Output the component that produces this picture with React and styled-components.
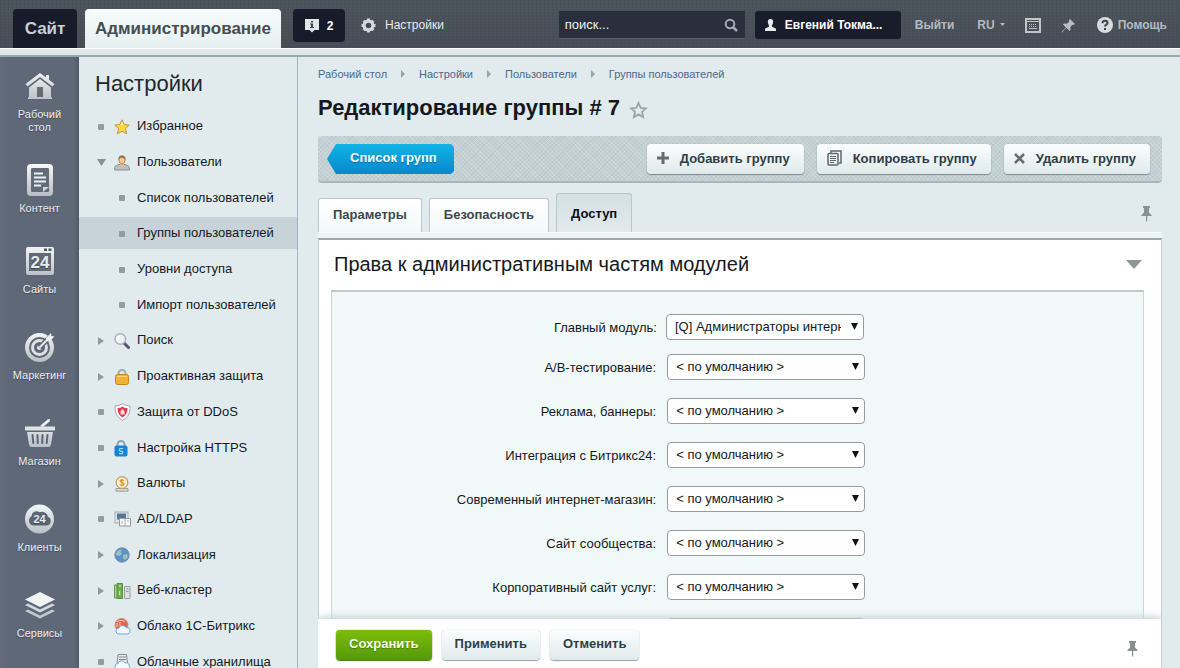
import { useState } from 'react'
import styled, { createGlobalStyle } from 'styled-components'

const GlobalStyle = createGlobalStyle`
    * {
        box-sizing: border-box;
    }
    body {
        margin: 0;
        background: #e1eaec;
        color: #14191c;
        font-family: "Liberation Sans", Arial, sans-serif;
        font-size: 13px;
    }
    button, input, select {
        font-family: inherit;
        margin: 0;
    }
    a {
        color: inherit;
        text-decoration: none;
    }
    svg {
        display: block;
        flex: none;
    }
`

const Page = styled.div`
    display: flex;
    flex-direction: column;
    height: 100vh;
    overflow: hidden;
`

/* top bar */

const TopBar = styled.header`
    display: flex;
    align-items: flex-start;
    flex: none;
    height: 48px;
    padding: 9px 13px 0;
    background:
        repeating-linear-gradient(0deg, rgba(255, 255, 255, 0.02) 0 1px, transparent 1px 3px),
        repeating-linear-gradient(90deg, rgba(0, 0, 0, 0.03) 0 1px, transparent 1px 4px),
        linear-gradient(#4b535b, #464d56);
`

const Strip = styled.div`
    flex: none;
    height: 9px;
    background: #dee8ea;
    border-top: 1px solid #fff;
    border-bottom: 2px solid #9ca6ab;
`

const SiteTab = styled.a`
    height: 39px;
    line-height: 40px;
    width: 64px;
    margin-right: 8px;
    text-align: center;
    font-size: 17px;
    font-weight: bold;
    color: #c9ced8;
    background: #181b29;
    border-radius: 4px 4px 0 0;
`

const AdminTab = styled(SiteTab)`
    width: 196px;
    margin-right: 12px;
    color: #474d51;
    background: linear-gradient(#f7fcfb, #e6eff1);
`

const Notice = styled.button`
    display: flex;
    align-items: center;
    justify-content: center;
    gap: 8px;
    width: 52px;
    height: 33px;
    padding: 0;
    border: 0;
    border-radius: 4px;
    background: #181b29;
    color: #fff;
    font-size: 12px;
    font-weight: bold;
`

const TopLink = styled.a`
    display: flex;
    align-items: center;
    gap: ${p => p.$gap || 5}px;
    height: 32px;
    margin-left: ${p => p.$space || 0}px;
    color: ${p => p.$bright ? '#e6eaee' : '#b4bac1'};
    font-size: 12px;
    font-weight: ${p => p.$bright ? 'normal' : 'bold'};
`

const IconButton = styled.button`
    display: flex;
    align-items: center;
    justify-content: center;
    padding: 0;
    border: 0;
    background: none;
    height: 32px;
    margin-left: ${p => p.$space || 0}px;
`

const Search = styled.form`
    display: flex;
    align-items: center;
    width: 186px;
    height: 28px;
    margin: 2px 10px 0 auto;
    padding: 0 7px 0 6px;
    background: #2b2e3d;
    border-bottom: 1px solid #5b636c;
`

const SearchInput = styled.input`
    flex: 1;
    min-width: 0;
    padding: 0;
    border: 0;
    outline: 0;
    background: none;
    color: #fff;
    font-size: 13px;
    &::placeholder {
        color: #f0f2f5;
        opacity: 1;
    }
`

const User = styled.button`
    display: flex;
    align-items: center;
    gap: 9px;
    width: 146px;
    height: 28px;
    margin: 2px 14px 0 0;
    padding: 0 10px;
    border: 0;
    border-radius: 3px;
    background: #181c2b;
    color: #fff;
    font-size: 12px;
    font-weight: bold;
    white-space: nowrap;
`

/* left part */

const Body = styled.div`
    display: flex;
    flex: 1;
    min-height: 0;
`

const Rail = styled.nav`
    display: flex;
    flex-direction: column;
    gap: 35px;
    flex: none;
    width: 79px;
    padding-top: 13px;
    background: linear-gradient(90deg, #666c78 0, #5f6877 8px, #5f6877 74px, #515a6a 100%);
`

const RailGroup = styled.div`
    display: flex;
    flex-direction: column;
    gap: ${p => p.$gap}px;
`

const RailItem = styled.a`
    display: flex;
    flex-direction: column;
    align-items: center;
    gap: 6px;
    color: #e8edf1;
    font-size: 11px;
    line-height: 13px;
    text-align: center;
    text-shadow: 0 1px 1px #3f4856;
`

const RailLabel = styled.span`
    width: 60px;
    display: flex;
    justify-content: center;
`

const Menu = styled.nav`
    display: flex;
    flex-direction: column;
    flex: none;
    width: 219px;
    overflow: hidden;
    background: #e1ebed;
    border-right: 1px solid #9db5c6;
`

const MenuTitle = styled.h2`
    margin: 0;
    padding: 14px 16px 13px;
    font-size: 22px;
    line-height: 26px;
    font-weight: normal;
    color: #20272a;
`

const MenuList = styled.ul`
    display: grid;
    flex: 1;
    grid-auto-rows: minmax(30px, 1fr);
    gap: 4px;
    margin: 0 0 -9px;
    padding: 0;
    list-style: none;
`

const MenuLink = styled.a`
    display: flex;
    align-items: center;
    height: 100%;
    padding-left: ${p => p.$sub ? 38 : 17}px;
    background: ${p => p.$active ? '#c7d3d8' : 'none'};
    font-size: 13px;
    white-space: nowrap;
`

const Marker = styled.span`
    display: flex;
    justify-content: center;
    width: 10px;
    margin: 2px ${p => p.$sub ? 10 : 8}px 0 0;
`

const MenuIcon = styled.span`
    display: flex;
    width: 23px;
    margin-top: 2px;
`

/* content */

const Main = styled.main`
    display: flex;
    flex-direction: column;
    flex: 1;
    min-width: 0;
    padding: 0 18px 0 20px;
    background: #e1eaed;
`

const Crumbs = styled.nav`
    display: flex;
    align-items: center;
    padding-top: 9px;
    line-height: 16px;
    font-size: 11px;
    color: #4b6889;
`

const CrumbArrow = styled.svg`
    margin: 0 13px 0 14px;
`

const TitleRow = styled.div`
    display: flex;
    align-items: center;
    gap: 9px;
    padding: 12px 0 14px;
`

const Title = styled.h1`
    margin: 0;
    font-size: 22px;
    line-height: 28px;
    color: #14191c;
`

const Toolbar = styled.div`
    display: flex;
    align-items: flex-start;
    gap: 13px;
    height: 47px;
    flex: none;
    padding: 8px 12px 0 9px;
    border-radius: 4px;
    border-bottom: 2px solid #a9b7ba;
    background:
        repeating-linear-gradient(45deg, rgba(255, 255, 255, 0.16) 0 1px, transparent 1px 3px),
        repeating-linear-gradient(-45deg, rgba(90, 110, 120, 0.08) 0 1px, transparent 1px 3px),
        #c3d0d4;
`

const BackButton = styled.a`
    width: 127px;
    height: 30px;
    margin-right: auto;
    padding-left: 23px;
    line-height: 28px;
    color: #fff;
    font-size: 13px;
    font-weight: bold;
    background: linear-gradient(#10b3e4, #0788cf);
    clip-path: polygon(9px 0, 124px 0, 127px 3px, 127px 27px, 124px 30px, 9px 30px, 0 15px);
    text-shadow: 0 1px 1px #0871a9;
`

const Button = styled.button`
    display: flex;
    align-items: center;
    justify-content: center;
    height: 30px;
    padding: 0 13px 3px;
    border: 0;
    border-radius: 4px;
    font-size: 13px;
    font-weight: bold;
    color: #303e45;
    background: linear-gradient(#fbfefe, #dfe9ec);
    box-shadow: 0 1px 1px #98a5aa, 0 0 1px #98a5aa;
`

const ToolButton = styled(Button)`
    gap: 11px;
    padding: 0 14px 2px 10px;
    box-shadow: 0 1px 1px #7d898e, 0 0 1px #98a5aa;
`

const SaveButton = styled(Button)`
    color: #f6fbe9;
    background: linear-gradient(#7dbd0d, #54990a);
    box-shadow: 0 1px 1px #47720e, 0 0 1px #47720e;
    text-shadow: 0 1px 1px #447b06;
`

const Tabs = styled.div`
    display: flex;
    align-items: flex-end;
    gap: 7px;
    flex: none;
    height: 49px;
`

const Tab = styled.button`
    height: ${p => p.$active ? 39 : 34}px;
    padding: 0 14px ${p => p.$active ? 0 : 2}px;
    border: 1px solid #b9c6cb;
    border-bottom: 0;
    border-radius: 3px 3px 0 0;
    background: ${p => p.$active ? 'linear-gradient(#d5e0e3, #e1eaed)' : 'linear-gradient(#fff, #f3f9fa)'};
    color: ${p => p.$active ? '#0b0f11' : '#3b484f'};
    font-size: 13px;
    font-weight: bold;
`

const TabsPin = styled.div`
    display: flex;
    align-self: center;
    margin: 12px 10px 0 auto;
`

const TabsLine = styled.div`
    flex: none;
    height: 6px;
    background: #edf3f5;
    border-top: 1px solid #f8fbfb;
`

const Panel = styled.section`
    flex: 1;
    min-height: 0;
    overflow: hidden;
    padding: 0 17px 0 12px;
    background: #fff;
    border: 1px solid #c4ced2;
    border-top: 2px solid #9faaae;
    border-bottom: 0;
`

const PanelHead = styled.div`
    display: flex;
    align-items: center;
    justify-content: space-between;
    height: 50px;
    padding: 0 1px 2px 3px;
`

const PanelTitle = styled.h2`
    margin: 0;
    font-size: 20px;
    font-weight: normal;
    color: #14191c;
`

const Form = styled.form`
    display: flex;
    flex-direction: column;
    gap: 18px;
    padding: 22px 0 22px 7px;
    background: #f1f8f8;
    border: 1px solid #ccd6d9;
    border-top: 2px solid #c0cacd;
`

const Field = styled.div`
    display: grid;
    grid-template-columns: 2fr 3fr;
    align-items: center;
    column-gap: ${p => p.$main ? 9 : 11}px;
    margin-bottom: ${p => p.$main ? -4 : 0}px;
`

const Label = styled.label`
    text-align: right;
    font-size: 13px;
`

const SelectBox = styled.div`
    grid-column: 2;
    position: relative;
    width: 198px;
`

const Select = styled.select`
    display: block;
    appearance: none;
    width: 100%;
    height: 26px;
    padding: 0 22px 1px 8px;
    border: 1px solid #979c9e;
    border-radius: 4px;
    background: #fff;
    color: #14191c;
    font-size: 13px;
    outline: 0;
`

const SelectArrow = styled.svg`
    position: absolute;
    right: 6px;
    top: 9px;
    pointer-events: none;
`

const Footer = styled.footer`
    display: flex;
    align-items: flex-start;
    gap: 10px;
    flex: none;
    height: 49px;
    padding: 11px 23px 0 18px;
    background: #fff;
    border-right: 1px solid #c4ced2;
    box-shadow: 0 -2px 8px #c3d1d4;
    clip-path: inset(-10px 0 0 0);
`

const FooterPin = styled.div`
    margin: 10px 0 0 auto;
`

/* icons */

const RailSvg = ({ children }) => <svg width="32" height="32" viewBox="0 0 32 32">
    <defs>
        <linearGradient id="metal" x1="0" y1="0" x2="0" y2="32" gradientUnits="userSpaceOnUse">
            <stop offset="0" stopColor="#f6f8f9" />
            <stop offset="1" stopColor="#b5bdc4" />
        </linearGradient>
    </defs>
    {children}
</svg>

const HomeIcon = () => <RailSvg>
    <path d="M16 3 1.500 14l2 2.500L16 7l12.500 9.500 2-2.500-5.500-4.200V5h-3v2.500z" fill="url(#metal)" />
    <path d="M5 17.500 16 9l11 8.500V27h1v2H4v-2h1z" fill="url(#metal)" />
    <path d="M13 17h6v10h-6z" fill="#656d72" />
</RailSvg>

const ContentIcon = () => <RailSvg>
    <rect x="3" y="0" width="26" height="32" rx="4" fill="url(#metal)" />
    <rect x="7" y="4" width="18" height="24" rx="1" fill="#626c78" />
    <path d="M10 9.500h9M10 13.500h12M10 17.500h12M10 21.500h7" stroke="#eef1f3" strokeWidth="2" />
    <path d="M19 28v-5h6z" fill="#d0d6da" />
</RailSvg>

const SitesIcon = () => <RailSvg>
    <path d="M4 2h24a2 2 0 0 1 2 2v24a2 2 0 0 1-2 2H4a2 2 0 0 1-2-2V4a2 2 0 0 1 2-2z" fill="url(#metal)" />
    <rect x="5" y="8" width="22" height="18" fill="#616a75" />
    <path d="M20 3.500h3v2.500h-3zM24.500 3.500h3v2.500h-3z" fill="#4e5763" />
    <text x="16" y="23" textAnchor="middle" fontSize="17" fontWeight="bold" fill="#e8ecef">24</text>
</RailSvg>

const TargetIcon = () => <RailSvg>
    <circle cx="15.500" cy="16.500" r="12.500" fill="none" stroke="url(#metal)" strokeWidth="4" />
    <circle cx="15.500" cy="16.500" r="7" fill="none" stroke="#dde2e5" strokeWidth="3" />
    <circle cx="15.500" cy="16.500" r="2.500" fill="#dde2e5" />
    <path d="M15.500 16.500 29 3" stroke="#5f6877" strokeWidth="5" />
    <path d="M15.500 16.500 25 7" stroke="#e6eaed" strokeWidth="2" />
    <path d="m22 7 5-5 .5 3 3 .5-5 5-3-.5z" fill="#eef1f3" />
</RailSvg>

const BasketIcon = () => <RailSvg>
    <path d="M16 9 23.500 2.500 26 2l-.5 2.500L19 10z" fill="#eef1f3" />
    <path d="M1 9.500h30v4H1z" fill="url(#metal)" />
    <path d="M3 15h26l-2 12.500a3 3 0 0 1-3 2.500H8a3 3 0 0 1-3-2.500z" fill="url(#metal)" />
    <path d="m8.500 18 .8 8M13.500 18l.3 8M18.500 18l-.3 8M23.500 18l-.8 8" stroke="#5c6573" strokeWidth="2" strokeLinecap="round" />
</RailSvg>

const ClientsIcon = () => <RailSvg>
    <circle cx="15.500" cy="16" r="14.500" fill="url(#metal)" />
    <path d="M9 22.500a5 5 0 0 1-1.500-9.200 5 5 0 0 1 8-4 6 6 0 0 1 8.500 4.500 4.600 4.600 0 0 1-1 8.700z" fill="#5c6571" />
    <text x="15.500" y="20" textAnchor="middle" fontSize="11" fontWeight="bold" fill="#e8ecef">24</text>
</RailSvg>

const ServicesIcon = () => <RailSvg>
    <path d="M16 3 31 10.500 16 18 1 10.500z" fill="#f0f3f4" />
    <path d="m1 16 3-1.500 12 6 12-6 3 1.500-15 7.500z" fill="#d5dade" />
    <path d="m1 22 3-1.500 12 6 12-6 3 1.500-15 7.500z" fill="#c2c9ce" />
</RailSvg>

const Small = ({ children }) => <svg width="16" height="16" viewBox="0 0 16 16">{children}</svg>

const menuIcons = {
    star: <Small><path d="m8 .8 2.200 4.700 5 .6-3.700 3.500 1 5.200L8 12.200l-4.500 2.600 1-5.200L.8 6.100l5-.6z" fill="#fbd640" stroke="#c39443" strokeWidth="1" strokeLinejoin="round" /><path d="m8 2.500 1.500 3.500H6.500z" fill="#fff3ae" /></Small>,
    user: <Small>
        <path d="M.7 15v-2.500C.7 10.500 4 10 5 9.500h6c1 .5 4.300 1 4.300 3V15z" fill="#bcc1c6" stroke="#858b92" />
        <path d="M6 8h4v2l-2 2.500L6 10z" fill="#eebd87" />
        <ellipse cx="8" cy="5" rx="3" ry="4" fill="#f4c995" stroke="#b08a5c" />
        <path d="M4.500 5C4 1.500 6 .5 8 .5s4 1 3.500 4.500C10.500 3 7.500 2.500 6 3z" fill="#93714a" />
    </Small>,
    search: <Small>
        <path d="m10 10 4.500 4.500" stroke="#5a5178" strokeWidth="3" strokeLinecap="round" />
        <circle cx="6.300" cy="6" r="5.300" fill="#edf3f7" stroke="#a7b1b8" strokeWidth="1.400" />
        <path d="M3 6c0-2 1.500-3 3-3" stroke="#fff" strokeWidth="1.500" fill="none" />
    </Small>,
    lock: <Small>
        <path d="M4.500 7V4.500a3.500 3.500 0 0 1 7 0V7" fill="none" stroke="#a5a9aa" strokeWidth="2" />
        <rect x="1.500" y="5.500" width="13" height="10" rx="2" fill="#efb331" stroke="#bf8722" />
        <path d="M3 7.500h10" stroke="#ffd66d" />
    </Small>,
    shield: <svg width="17" height="18" viewBox="0 0 17 18">
        <path d="M8.500.7C11 2.200 13 2.500 16 3c.3 7-2 11.500-7.500 14.300C3 14.500.7 10 1 3c3-.5 5-.8 7.500-2.300z" fill="#fff" stroke="#a5a5a9" />
        <path d="M8.500 3.500C10 4.500 11.500 5 13.500 5c0 4.500-1.500 7.500-5 9.500-3.500-2-5-5-5-9.500 2 0 3.500-.5 5-1.500z" fill="#e33d50" />
        <path d="M6.500 8h4v3.500h-4zM7.300 8V6.500h2.400V8" fill="#fff" opacity=".8" />
    </svg>,
    https: <svg width="14" height="17" viewBox="0 0 14 17">
        <path d="M3.500 7V4.500a3.500 3.500 0 0 1 7 0V7" fill="none" stroke="#8aa4b5" strokeWidth="2" />
        <rect x=".5" y="5.500" width="13" height="11" rx="2" fill="#1683d4" />
        <path d="M9 8.500H6.500a1.300 1.300 0 0 0 0 2.600h1a1.300 1.300 0 0 1 0 2.600H5" fill="none" stroke="#a4d9fb" strokeWidth="1.200" />
    </svg>,
    money: <Small>
        <path d="M2 12.500h12v2.700H2z" fill="#d5d8d8" stroke="#9c9c99" />
        <circle cx="8" cy="6.500" r="5.800" fill="#fbf2d8" stroke="#c7a05d" strokeWidth="1.200" />
        <path d="M10 4.500C9 3.500 6 3.500 6 5s4 1.200 4 3-3 1.800-4 .6M8 2.800v7.500" fill="none" stroke="#d99526" strokeWidth="1.200" />
    </Small>,
    ldap: <svg width="17" height="16" viewBox="0 0 17 16">
        <rect x="1" y="1" width="13" height="11" fill="#dfe6eb" stroke="#a2adb6" />
        <path d="M3 2.500h9v6H3z" fill="#577492" />
        <path d="M5.500 7.500h11v7.500h-11z" fill="#f7f8f9" stroke="#8f999f" />
        <path d="M8 10v3M11 7.500V15M13 10h2" stroke="#a2acb2" />
    </svg>,
    globe: <Small>
        <circle cx="8" cy="8" r="7.200" fill="#5c92cc" stroke="#718da9" />
        <path d="M3 4.500c2-2 4-2 5-1.500L6.500 5 8 7l-3 2-3-1zM9 8l4-1 1 3-3 3-2-2z" fill="#9cc4b4" />
    </Small>,
    cluster: <svg width="17" height="16" viewBox="0 0 17 16">
        <path d="M.5 2h3v13h-3z" fill="#acd58e" stroke="#67974f" />
        <path d="M3 .5h5.500v15H3z" fill="#6cb14b" stroke="#588b44" />
        <path d="M5 3h2M5.700 8v4" stroke="#ddf2d2" />
        <path d="M10.500 3.500h5.500v12h-5.500z" fill="#dce0e2" stroke="#969ea3" />
        <path d="M12 6h2.500M12 8.500h2.500" stroke="#92999d" />
    </svg>,
    cloud: <svg width="17" height="17" viewBox="0 0 17 17">
        <circle cx="7.500" cy="7" r="6.500" fill="#df654b" stroke="#c68d80" />
        <path d="M3 4c2-2 6-2 8 0M3 9V5M6 9V4" stroke="#f9cec2" fill="none" />
        <path d="M5 16a3 3 0 0 1 0-6 3.800 3.800 0 0 1 7-.5A3.300 3.300 0 0 1 13.500 16z" fill="#f2faff" stroke="#6da9d8" />
    </svg>,
    storage: <svg width="17" height="16" viewBox="0 0 17 16">
        <path d="M4 .5h8.500l1 9H3z" fill="#e6eaec" stroke="#858e94" />
        <path d="M5 3h7M5 5.500h7" stroke="#7f8a91" />
        <path d="M4 15.500a3 3 0 0 1 0-6 3.800 3.800 0 0 1 7-.5 3.300 3.300 0 0 1 2 6.500z" fill="#f2faff" stroke="#6da9d8" />
    </svg>,
}

const Dot = () => <svg width="6" height="6" viewBox="0 0 6 6"><rect width="6" height="6" rx="1" fill="#939d9f" /></svg>

const Right = () => <svg width="8" height="10" viewBox="0 0 8 10"><path d="M1 1v8l6-4z" fill="#919b9e" /></svg>

const Down = () => <svg width="9" height="8" viewBox="0 0 9 8"><path d="M0 0h9L4.500 7z" fill="#879194" /></svg>

const PinIcon = () => <svg width="11" height="17" viewBox="0 0 11 17">
    <path d="M2 1h7v1.500L8 3.500v4L10.500 10v1h-10v-1L3 7.500v-4l-1-1zM5 11h1.200v5.500H5z" fill="#87918f" />
</svg>

const GearIcon = () => <svg width="15" height="15" viewBox="0 0 15 15">
    <g stroke="#d4d8dc" strokeWidth="3">
        <path d="M7.500 .5v14M.5 7.500h14M2.700 2.700l9.600 9.600M12.300 2.700 2.700 12.300" />
    </g>
    <circle cx="7.500" cy="7.500" r="6" fill="#d4d8dc" />
    <circle cx="7.500" cy="7.500" r="2.700" fill="#414851" />
</svg>

const railTop = [
    { label: 'Рабочий стол', Icon: HomeIcon },
    { label: 'Контент', Icon: ContentIcon },
    { label: 'Сайты', Icon: SitesIcon },
]

const railBottom = [
    { label: 'Маркетинг', Icon: TargetIcon },
    { label: 'Магазин', Icon: BasketIcon },
    { label: 'Клиенты', Icon: ClientsIcon },
    { label: 'Сервисы', Icon: ServicesIcon },
]

const menu = [
    { label: 'Избранное', icon: 'star', mark: 'dot' },
    { label: 'Пользователи', icon: 'user', mark: 'down' },
    { label: 'Список пользователей', sub: true },
    { label: 'Группы пользователей', sub: true },
    { label: 'Уровни доступа', sub: true },
    { label: 'Импорт пользователей', sub: true },
    { label: 'Поиск', icon: 'search', mark: 'right' },
    { label: 'Проактивная защита', icon: 'lock', mark: 'right' },
    { label: 'Защита от DDoS', icon: 'shield', mark: 'dot' },
    { label: 'Настройка HTTPS', icon: 'https', mark: 'dot' },
    { label: 'Валюты', icon: 'money', mark: 'right' },
    { label: 'AD/LDAP', icon: 'ldap', mark: 'dot' },
    { label: 'Локализация', icon: 'globe', mark: 'right' },
    { label: 'Веб-кластер', icon: 'cluster', mark: 'right' },
    { label: 'Облако 1С-Битрикс', icon: 'cloud', mark: 'right' },
    { label: 'Облачные хранилища', icon: 'storage', mark: 'dot' },
]

const crumbs = ['Рабочий стол', 'Настройки', 'Пользователи', 'Группы пользователей']

const tabs = ['Параметры', 'Безопасность', 'Доступ']

const fields = [
    { label: 'Главный модуль:', value: '[Q] Администраторы интернет-магазина', main: true },
    { label: 'А/В-тестирование:' },
    { label: 'Реклама, баннеры:' },
    { label: 'Интеграция с Битрикс24:' },
    { label: 'Современный интернет-магазин:' },
    { label: 'Сайт сообщества:' },
    { label: 'Корпоративный сайт услуг:' },
]

const marks = { dot: <Dot />, right: <Right />, down: <Down /> }

const Header = () => <TopBar>
    <SiteTab href="#">Сайт</SiteTab>
    <AdminTab href="#">Администрирование</AdminTab>
    <Notice aria-label="Уведомления">
        <svg width="14" height="15" viewBox="0 0 14 15">
            <path d="M0 1h14v11H9.500L7 14.500 4.500 12H0z" fill="#e1e5e9" />
            <path d="M6 3h2v1.500H6zM5 5.500h3V9h1v1H5V9h1V6.500H5z" fill="#3a4350" />
        </svg>
        2
    </Notice>
    <TopLink href="#" $bright $space={16} $gap={9}><GearIcon />Настройки</TopLink>
    <Search onSubmit={e => e.preventDefault()}>
        <SearchInput type="text" placeholder="поиск..." aria-label="Поиск" />
        <IconButton type="submit" aria-label="Найти">
            <svg width="14" height="14" viewBox="0 0 14 14" fill="none" stroke="#a3a8b1" strokeWidth="2">
                <circle cx="6" cy="6" r="4.300" />
                <path d="m9 9 4 4" strokeWidth="2.500" />
            </svg>
        </IconButton>
    </Search>
    <User>
        <svg width="11" height="12" viewBox="0 0 11 12">
            <path d="M5.500 0C8 0 8.500 2 8 4 7.700 5.500 7 6 7 7.500c0 1 4 1 4 3V12H0v-1.500c0-2 4-2 4-3C4 6 3.300 5.500 3 4c-.5-2 0-4 2.500-4z" fill="#e7eaed" />
        </svg>
        Евгений Токма...
    </User>
    <TopLink href="#">Выйти</TopLink>
    <TopLink href="#" $space={23}>RU<svg width="5" height="4" viewBox="0 0 5 4"><path d="M0 0h5L2.500 3z" fill="#b4bac1" /></svg></TopLink>
    <IconButton $space={20} aria-label="Клавиатура">
        <svg width="16" height="15" viewBox="0 0 16 15" fill="none" stroke="#c0c5ca">
            <path d="M1 1h14v13H1z" strokeWidth="2" />
            <path d="M1 3.500h14" />
            <path d="M4 6.500h8M4 8.500h8" strokeDasharray="1 1" />
            <path d="M4 10.500h8" />
        </svg>
    </IconButton>
    <IconButton $space={20} aria-label="Закрепить">
        <svg width="15" height="15" viewBox="0 0 15 15">
            <path d="m9 1 5 5-1.500 1-1-.2L9.300 9l.2 3-1 1-3.300-3.300L1 14.500l-.5-.5 4.300-4.500L2 6.500l1-1 3 .2L8.200 3.500 8 2.300z" fill="#b7bdc3" />
        </svg>
    </IconButton>
    <TopLink href="#" $space={21}>
        <svg width="16" height="16" viewBox="0 0 16 16">
            <circle cx="8" cy="8" r="8" fill="#d8dce0" />
            <path d="M5.500 6.200C5.500 4.500 6.500 3.800 8 3.800s2.500.9 2.500 2.200C10.500 7.700 8 7.700 8 9.500" fill="none" stroke="#3c434c" strokeWidth="2" />
            <path d="M7 11h2v2H7z" fill="#3c434c" />
        </svg>
        Помощь
    </TopLink>
</TopBar>

const RailLink = ({ item }) => <RailItem href="#"><item.Icon /><RailLabel>{item.label}</RailLabel></RailItem>

const SideMenu = () => {
    const [active, setActive] = useState('Группы пользователей')

    return <Menu>
        <MenuTitle>Настройки</MenuTitle>
        <MenuList>
            {menu.map(m => <li key={m.label}>
                <MenuLink href="#" $sub={m.sub} $active={m.label === active} onClick={() => setActive(m.label)}>
                    <Marker $sub={m.sub}>{marks[m.mark || 'dot']}</Marker>
                    {m.icon && <MenuIcon>{menuIcons[m.icon]}</MenuIcon>}
                    {m.label}
                </MenuLink>
            </li>)}
        </MenuList>
    </Menu>
}

const Choice = ({ value = '< по умолчанию >', ...rest }) => <SelectBox>
    <Select {...rest}>
        <option>{value}</option>
    </Select>
    <SelectArrow width="7" height="8" viewBox="0 0 7 8"><path d="M0 0h7L3.500 7z" fill="#0f1315" /></SelectArrow>
</SelectBox>

const App = () => {
    const [tab, setTab] = useState('Доступ')

    return <><GlobalStyle /><Page>
        <Header />
        <Strip />
        <Body>
            <Rail>
                <RailGroup $gap={30}>{railTop.map(i => <RailLink key={i.label} item={i} />)}</RailGroup>
                <RailGroup $gap={35}>{railBottom.map(i => <RailLink key={i.label} item={i} />)}</RailGroup>
            </Rail>
            <SideMenu />
            <Main>
                <Crumbs>
                    {crumbs.map((c, i) => [
                        i > 0 && <CrumbArrow key={i} width="5" height="8" viewBox="0 0 5 8"><path d="M0 0v8l4-4z" fill="#98a4ab" /></CrumbArrow>,
                        <a key={c} href="#">{c}</a>,
                    ])}
                </Crumbs>
                <TitleRow>
                    <Title>Редактирование группы # 7</Title>
                    <svg width="19" height="22" viewBox="0 -4 19 22">
                        <path d="m9.500 2 2.200 4.800 5.300.6-4 3.500 1.200 5.300-4.700-2.800-4.700 2.800L6 10.900 2 7.400l5.300-.6z" fill="none" stroke="#9ca4a9" strokeWidth="1.800" />
                    </svg>
                </TitleRow>
                <Toolbar>
                    <BackButton href="#">Список групп</BackButton>
                    <ToolButton>
                        <svg width="12" height="12" viewBox="0 0 12 12"><path d="M6 0v12M0 6h12" stroke="#656d71" strokeWidth="3" /></svg>
                        Добавить группу
                    </ToolButton>
                    <ToolButton>
                        <svg width="15" height="16" viewBox="0 0 15 16" fill="none" stroke="#5f686d">
                            <path d="M4 3V1h10v12h-2" strokeWidth="1.500" />
                            <rect x="1" y="3.500" width="10" height="11.500" rx="1" strokeWidth="1.500" />
                            <path d="M3 6.500h6M3 8.500h6M3 10.500h6M3 12.500h4" />
                        </svg>
                        Копировать группу
                    </ToolButton>
                    <ToolButton>
                        <svg width="11" height="11" viewBox="0 0 11 11"><path d="m1 1 9 9M10 1l-9 9" stroke="#656d71" strokeWidth="2.500" /></svg>
                        Удалить группу
                    </ToolButton>
                </Toolbar>
                <Tabs role="tablist">
                    {tabs.map(t => <Tab key={t} role="tab" aria-selected={t === tab} $active={t === tab} onClick={() => setTab(t)}>{t}</Tab>)}
                    <TabsPin><PinIcon /></TabsPin>
                </Tabs>
                <TabsLine />
                <Panel>
                    <PanelHead>
                        <PanelTitle>Права к административным частям модулей</PanelTitle>
                        <svg width="18" height="9" viewBox="0 0 18 9"><path d="M1 0h16L9 9z" fill="#8d9799" /></svg>
                    </PanelHead>
                    <Form>
                        {fields.map((f, i) => <Field key={f.label} $main={f.main}>
                            <Label htmlFor={`right-${i}`}>{f.label}</Label>
                            <Choice id={`right-${i}`} value={f.value} />
                        </Field>)}
                        <Field>
                            <Choice aria-label="Другие модули" value="" />
                        </Field>
                    </Form>
                </Panel>
                <Footer>
                    <SaveButton>Сохранить</SaveButton>
                    <Button>Применить</Button>
                    <Button>Отменить</Button>
                    <FooterPin><PinIcon /></FooterPin>
                </Footer>
            </Main>
        </Body>
    </Page></>
}

export default App
